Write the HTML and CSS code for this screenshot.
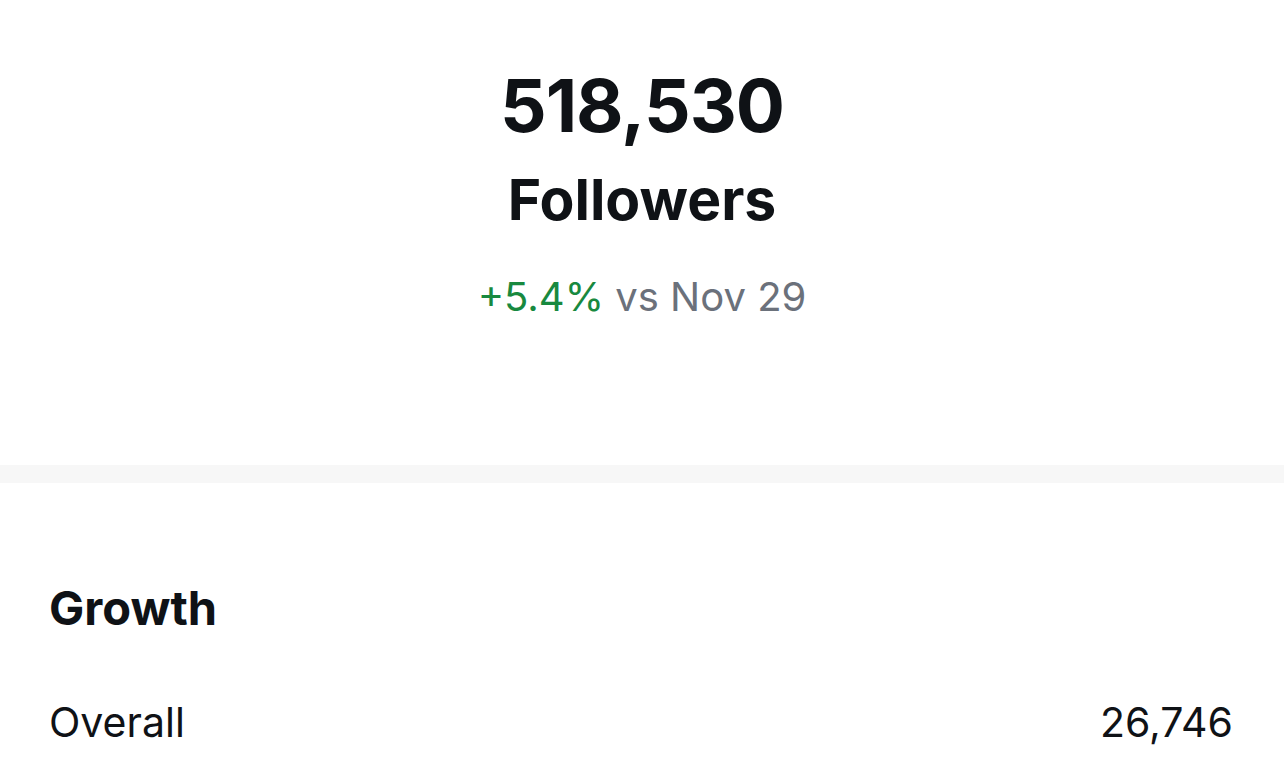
FILE: index.html
```html
<!DOCTYPE html>
<html lang="en">
<head>
<meta charset="utf-8">
<title>Followers</title>
<link rel="stylesheet" href="styles.css">
</head>
<body>
<section class="summary">
  <div class="total">518,530</div>
  <div class="label">Followers</div>
  <div class="change"><span class="up">+5.4%</span> <span class="vs">vs Nov 29</span></div>
</section>
<div class="divider"></div>
<section class="growth">
  <h2 class="growth-title">Growth</h2>
  <div class="row">
    <span class="row-label">Overall</span>
    <span class="row-value">26,746</span>
  </div>
</section>
</body>
</html>
```
FILE: styles.css
```css
html, body {
  margin: 0;
  padding: 0;
  background: #ffffff;
}
body {
  font-family: Inter, "Noto Sans", "Liberation Sans", sans-serif;
  color: #0f1216;
  width: 1284px;
  height: 784px;
  overflow: hidden;
}
.summary {
  height: 465px;
  display: flex;
  flex-direction: column;
  align-items: center;
  padding-top: 62px;
  box-sizing: border-box;
}
.total {
  font-size: 73px;
  font-weight: 700;
  line-height: 88px;
  letter-spacing: -1px;
}
.label {
  margin-top: 16px;
  font-size: 57px;
  font-weight: 700;
  line-height: 68px;
}
.change {
  margin-top: 39px;
  font-size: 40px;
  line-height: 48px;
}
.up { color: #18893f; }
.vs { color: #6b717b; }
.divider {
  height: 18px;
  background: #f7f7f7;
}
.growth {
  padding: 0 51px 0 49px;
}
.growth-title {
  margin: 97px 0 0;
  font-size: 47px;
  font-weight: 700;
  line-height: 56px;
}
.row {
  display: flex;
  justify-content: space-between;
  margin-top: 60px;
  font-size: 41px;
  line-height: 52px;
}
```
